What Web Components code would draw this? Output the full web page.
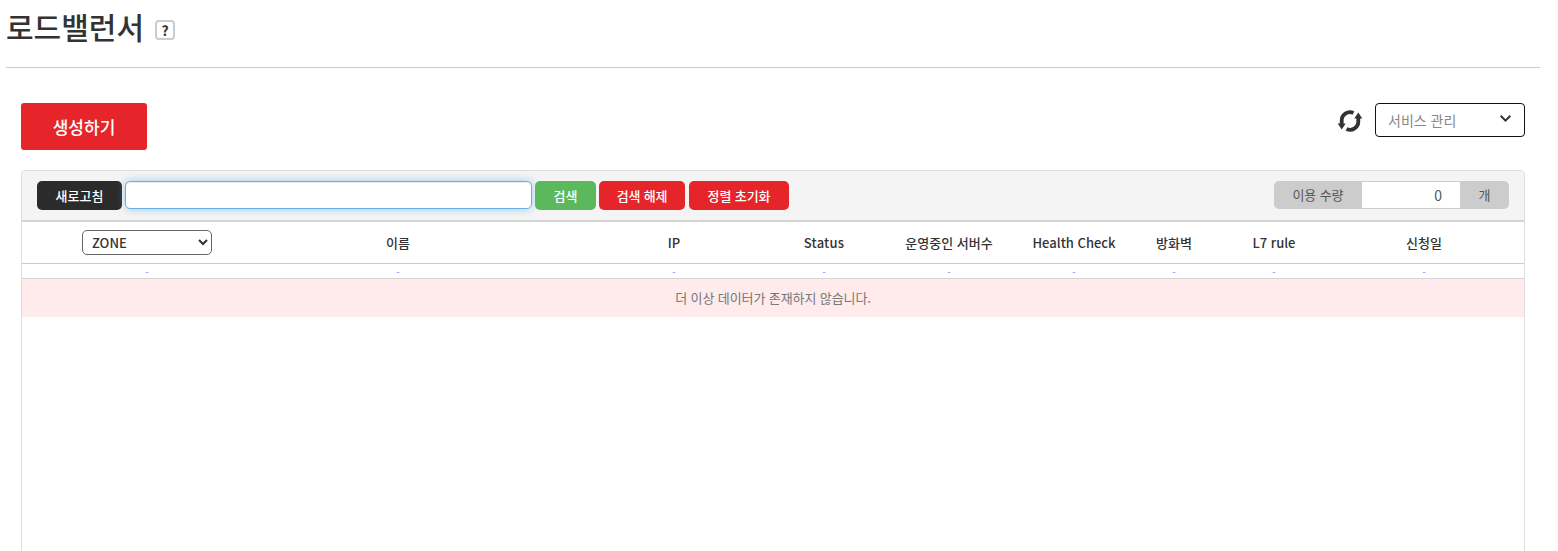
<!DOCTYPE html>
<html lang="ko">
<head>
<meta charset="utf-8">
<title>로드밸런서</title>
<style>
    html, body { margin: 0; height: 551px; overflow: hidden; background: #fff; }
    body { font: 14px "Noto Sans CJK KR", "Noto Sans", sans-serif; color: #333; }
</style>
</head>
<body>
<lb-page>
    <lb-title slot="title">로드밸런서</lb-title>
    <lb-actions slot="actions"></lb-actions>
    <lb-panel slot="panel"></lb-panel>
</lb-page>

<script>
class LbPage extends HTMLElement {
    constructor() {
        super();
        this.attachShadow({ mode: 'open' });
        this.shadowRoot.innerHTML = `
            <style>
                :host { display: block; padding: 0 18px 0 6px; }
                .body { padding: 35px 15px 0; }
            </style>
            <slot name="title"></slot>
            <div class="body">
                <slot name="actions"></slot>
                <slot name="panel"></slot>
            </div>
        `;
    }
}

class LbTitle extends HTMLElement {
    constructor() {
        super();
        this.attachShadow({ mode: 'open' });
        this.shadowRoot.innerHTML = `
            <style>
                :host { display: block; height: 67px; border-bottom: 1px solid #ccc; }
                .row { display: flex; align-items: center; height: 52px; gap: 11px; }
                h1 { margin: 0; font-size: 30px; font-weight: 500; line-height: 40px; color: #333; }
                .help { width: 16px; height: 16px; border: 2px solid #ccc; border-radius: 4px; display: flex; align-items: center; justify-content: center;
                    font-size: 14px; font-weight: 700; color: #333; margin-top: 8px; }
            </style>
            <div class="row">
                <h1><slot></slot></h1>
                <span class="help">?</span>
            </div>
        `;
    }
}

class LbActions extends HTMLElement {
    constructor() {
        super();
        this.attachShadow({ mode: 'open' });
        this.shadowRoot.innerHTML = `
            <style>
                :host { display: flex; justify-content: space-between; align-items: flex-start; height: 47px; margin-bottom: 20px; }
                .create { width: 126px; height: 47px; background: #e6252b; color: #fff; border: 0; border-radius: 3px; font: 500 17px "Noto Sans CJK KR", sans-serif; padding: 0; }
                .right { display: flex; align-items: center; gap: 13px; }
                svg.sync { width: 24px; height: 24px; display: block; overflow: visible; margin-top: 2px; }
                .service { box-sizing: border-box; width: 150px; height: 34px; border: 1px solid #111; border-radius: 4px; display: flex; align-items: center; justify-content: space-between;
                    padding: 0 13px 0 12px; font-size: 14px; color: #888; }
                .service svg { width: 11px; height: 7px; fill: none; stroke: #333; stroke-width: 2; margin-top: -4px; }
            </style>
            <button class="create">생성하기</button>
            <div class="right">
                <svg class="sync" viewBox="0 0 24 24">
                    <path d="M15.500 4A8.300 8.300 0 0 0 3.700 12v3" fill="none" stroke="#333" stroke-width="3.800"/>
                    <path d="M-.3 14.500h8l-4 6z" fill="#333"/>
                    <path d="M8.500 20A8.300 8.300 0 0 0 20.300 12V9" fill="none" stroke="#333" stroke-width="3.800"/>
                    <path d="M16.300 9.500h8l-4-6z" fill="#333"/>
                </svg>
                <div class="service"><span>서비스 관리</span><svg viewBox="0 0 11 7"><path d="M.7 .8l4.800 4.800 4.800-4.800"/></svg></div>
            </div>
        `;
    }
}

class LbToolbar extends HTMLElement {
    constructor() {
        super();
        this.attachShadow({ mode: 'open' });
        this.shadowRoot.innerHTML = `
            <style>
                :host { display: flex; align-items: flex-start; height: 39px; padding: 10px 15px 0; background: #f4f4f4; border-bottom: 2px solid #d5d5d5; border-radius: 4px 4px 0 0; gap: 3px; }
                button { height: 29px; border: 0; border-radius: 5px; color: #fff; font: 500 13px "Noto Sans CJK KR", sans-serif; padding: 0; }
                .dark { width: 85px; background: #2b2b2b; }
                .green { width: 61px; background: #5cb85c; }
                .red { background: #e6252b; }
                input { width: 405px; height: 26px; box-sizing: content-box; padding: 0; border: 1px solid #66afe9; border-radius: 5px; background: #fff; outline: 0;
                    box-shadow: inset 0 1px 1px rgba(0,0,0,.075), 0 0 8px rgba(102,175,233,.6); }
                .usage { margin-left: auto; display: flex; height: 28px; border-radius: 5px; overflow: hidden; background: #ccc; font-size: 13px; color: #555; line-height: 28px; }
                .usage .lbl { width: 88px; text-align: center; letter-spacing: -.1px; }
                .usage .num { width: 98px; background: #fff; margin: 1px 0; line-height: 26px; text-align: right; font-size: 14px; }
                .usage .num span { display: inline-block; padding-right: 18px; }
                .usage .unit { width: 49px; text-align: center; }
            </style>
            <button class="dark">새로고침</button>
            <input type="text">
            <button class="green">검색</button>
            <button class="red" style="width:86px;letter-spacing:-.2px">검색 해제</button>
            <button class="red" style="width:100px;margin-left:1px;letter-spacing:-.1px">정렬 초기화</button>
            <div class="usage">
                <div class="lbl">이용 수량</div>
                <div class="num"><span>0</span></div>
                <div class="unit">개</div>
            </div>
        `;
    }
}

const LB_COLS = '250px 302px 200px 100px 150px 100px 100px 100px 200px';

class LbHeader extends HTMLElement {
    constructor() {
        super();
        this.attachShadow({ mode: 'open' });
        const names = ['이름', 'IP', 'Status', '운영중인 서버수', 'Health Check', '방화벽', 'L7 rule', '신청일'];
        this.shadowRoot.innerHTML = `
            <style>
                :host { display: grid; grid-template-columns: ${LB_COLS}; align-items: center; height: 41px; border-bottom: 1px solid #ccc; text-align: center;
                    font-size: 13px; font-weight: 500; color: #333; }
                .name { padding-right: 50px; }
                .status { letter-spacing: .2px; }
                select { width: 130px; height: 25px; border: 1px solid #666; border-radius: 5px; background: #fff; padding: 0 0 0 5px; font: 500 13px "Noto Sans CJK KR", sans-serif; color: #333; }
            </style>
            <div><select><option>ZONE</option></select></div>
            ${names.map((n, i) => `<div class="${i === 0 ? 'name' : n === 'Status' ? 'status' : ''}">${n}</div>`).join('')}
        `;
    }
}

class LbDashRow extends HTMLElement {
    constructor() {
        super();
        this.attachShadow({ mode: 'open' });
        this.shadowRoot.innerHTML = `
            <style>
                :host { display: grid; grid-template-columns: ${LB_COLS}; height: 14px; border-bottom: 1px solid #d5d5d5; text-align: center;
                    font-size: 10px; line-height: 15px; color: #8a8aff; }
                .name { padding-right: 50px; }
            </style>
            ${Array.from({ length: 9 }, (_, i) => `<div class="${i === 1 ? 'name' : ''}">-</div>`).join('')}
        `;
    }
}

class LbEmpty extends HTMLElement {
    constructor() {
        super();
        this.attachShadow({ mode: 'open' });
        this.shadowRoot.innerHTML = `
            <style>
                :host { display: block; height: 38px; line-height: 38px; background: #ffebeb; text-align: center; font-size: 13px; color: #777; letter-spacing: -.1px; }
            </style>
            더 이상 데이터가 존재하지 않습니다.
        `;
    }
}

class LbPanel extends HTMLElement {
    constructor() {
        super();
        this.attachShadow({ mode: 'open' });
        this.shadowRoot.innerHTML = `
            <style>
                :host { display: block; height: 500px; border: 1px solid #ddd; border-radius: 4px; }
            </style>
            <lb-toolbar></lb-toolbar>
            <lb-header></lb-header>
            <lb-dash-row></lb-dash-row>
            <lb-empty></lb-empty>
        `;
    }
}

customElements.define('lb-page', LbPage);
customElements.define('lb-title', LbTitle);
customElements.define('lb-actions', LbActions);
customElements.define('lb-toolbar', LbToolbar);
customElements.define('lb-header', LbHeader);
customElements.define('lb-dash-row', LbDashRow);
customElements.define('lb-empty', LbEmpty);
customElements.define('lb-panel', LbPanel);
</script>
</body>
</html>
